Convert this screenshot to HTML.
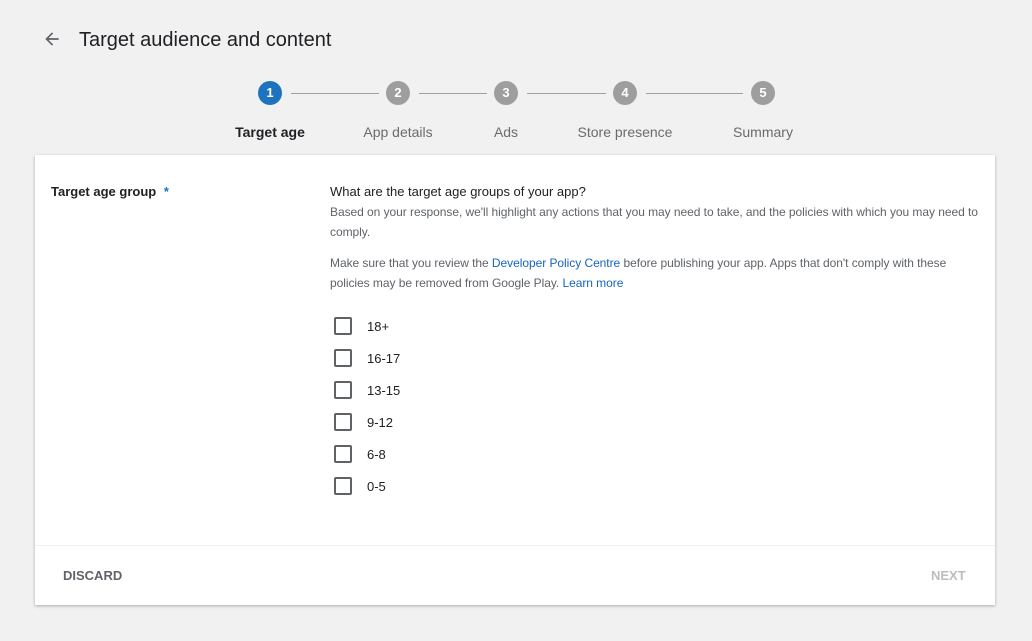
<!DOCTYPE html>
<html><head><style>
body{margin:0;width:1032px;height:641px;background:#f1f1f1;font-family:"Liberation Sans",Arial,sans-serif;position:relative;overflow:hidden;color:#202124}
.a{position:absolute}
.title{left:79px;top:29px;font-size:20px;color:#202124;white-space:nowrap}
.c{width:24px;height:24px;border-radius:50%;background:#9e9e9e;color:#fff;font-size:13px;font-weight:bold;text-align:center;line-height:24px;top:81px}
.ln{height:1px;background:#9e9e9e;top:93px}
.lb{top:124px;font-size:14px;color:#6b6b6b;transform:translateX(-50%);white-space:nowrap}
.card{left:35px;top:155px;width:960px;height:450px;background:#fff;box-shadow:0 1px 3px rgba(0,0,0,.3)}
.t{font-size:12px;color:#5f6368;line-height:20px;letter-spacing:-0.05px}
.cb{width:14px;height:14px;border:2px solid #5f6368;border-radius:2px;left:334px}
.cl{left:367px;font-size:13px;color:#202124}
a{color:#1565c0;text-decoration:none}
</style></head><body>
<svg class="a" style="left:42px;top:29px" width="20" height="20" viewBox="0 0 24 24"><path d="M20 11H7.83l5.59-5.59L12 4l-8 8 8 8 1.41-1.41L7.83 13H20v-2z" fill="#5f6368"/></svg>
<div class="a title">Target audience and content</div>
<div class="a c" style="left:258px;background:#1e73be">1</div>
<div class="a c" style="left:386px">2</div>
<div class="a c" style="left:494px">3</div>
<div class="a c" style="left:613px">4</div>
<div class="a c" style="left:751px">5</div>
<div class="a ln" style="left:291px;width:88px"></div>
<div class="a ln" style="left:419px;width:68px"></div>
<div class="a ln" style="left:527px;width:79px"></div>
<div class="a ln" style="left:646px;width:97px"></div>
<div class="a lb" style="left:270px;color:#202124;font-weight:bold">Target age</div>
<div class="a lb" style="left:398px">App details</div>
<div class="a lb" style="left:506px">Ads</div>
<div class="a lb" style="left:625px">Store presence</div>
<div class="a lb" style="left:763px">Summary</div>
<div class="a card"></div>
<div class="a" style="left:51px;top:184px;font-size:13px;font-weight:bold;color:#202124">Target age group <span style="color:#1e73be;margin-left:4px">*</span></div>
<div class="a" style="left:330px;top:184px;font-size:13px;color:#202124">What are the target age groups of your app?</div>
<div class="a t" style="left:330px;top:202px;width:660px">Based on your response, we'll highlight any actions that you may need to take, and the policies with which you may need to comply.</div>
<div class="a t" style="left:330px;top:253px;width:640px">Make sure that you review the <a>Developer Policy Centre</a> before publishing your app. Apps that don't comply with these policies may be removed from Google Play. <a>Learn more</a></div>
<div class="a cb" style="top:317px"></div><div class="a cl" style="top:319px">18+</div>
<div class="a cb" style="top:349px"></div><div class="a cl" style="top:351px">16-17</div>
<div class="a cb" style="top:381px"></div><div class="a cl" style="top:383px">13-15</div>
<div class="a cb" style="top:413px"></div><div class="a cl" style="top:415px">9-12</div>
<div class="a cb" style="top:445px"></div><div class="a cl" style="top:447px">6-8</div>
<div class="a cb" style="top:477px"></div><div class="a cl" style="top:479px">0-5</div>
<div class="a" style="left:35px;top:545px;width:960px;height:1px;background:#f0f0f0"></div>
<div class="a" style="left:63px;top:568px;font-size:13px;font-weight:bold;color:#5f6368">DISCARD</div>
<div class="a" style="left:931px;top:568px;font-size:13px;font-weight:bold;color:#bdbdbd">NEXT</div>
</body></html>
